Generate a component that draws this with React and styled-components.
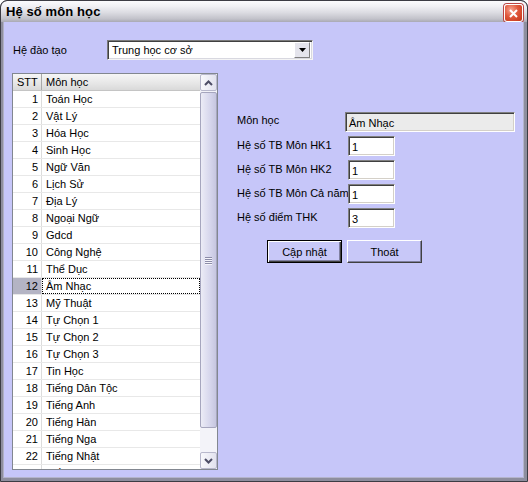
import React from 'react';
import styled, { createGlobalStyle } from 'styled-components';

const GlobalStyle = createGlobalStyle`
  html, body {
    margin: 0;
    padding: 0;
    background: #ffffff;
  }
  * {
    box-sizing: border-box;
  }
`;

const subjects = [
  'Toán Học', 'Vật Lý', 'Hóa Học', 'Sinh Học', 'Ngữ Văn', 'Lịch Sử', 'Địa Lý',
  'Ngoại Ngữ', 'Gdcd', 'Công Nghệ', 'Thể Dục', 'Âm Nhạc', 'Mỹ Thuật',
  'Tự Chọn 1', 'Tự Chọn 2', 'Tự Chọn 3', 'Tin Học', 'Tiếng Dân Tộc',
  'Tiếng Anh', 'Tiếng Hàn', 'Tiếng Nga', 'Tiếng Nhật', 'Tiếng Pháp',
];

const Window = styled.div`
  width: 528px;
  height: 482px;
  display: flex;
  flex-direction: column;
  background: #4a4a56;
  border: 1px solid #3c3c44;
  border-radius: 7px 7px 0 0;
  overflow: hidden;
  font-family: 'Liberation Sans', Arial, sans-serif;
  font-size: 11px;
  color: #000;
`;

const TitleBar = styled.div`
  height: 21px;
  flex: none;
  display: flex;
  align-items: center;
  justify-content: space-between;
  padding: 0 4px 0 5px;
  background: linear-gradient(#fbfbfd 0%, #f0f0f4 25%, #dcdce2 55%, #c2c2ca 85%, #a9a9b4 100%);
  border-radius: 6px 6px 0 0;
`;

const Title = styled.span`
  font-size: 13px;
  font-weight: bold;
  color: #000;
  letter-spacing: 0.1px;
`;

const CloseButton = styled.div`
  width: 19px;
  height: 18px;
  margin-top: 3px;
  border-radius: 3px;
  border: 1px solid #fff;
  background: radial-gradient(circle at 35% 30%, #f7a492 0%, #e0583c 45%, #c23417 100%);
  box-shadow: 0 0 0 1px #b44;
  display: flex;
  align-items: center;
  justify-content: center;
`;

const Body = styled.div`
  flex: 1;
  display: flex;
  flex-direction: column;
  background: #c6c6f9;
  border-style: solid;
  border-color: #8e8e9e;
  border-width: 0 3px 3px 2px;
  box-shadow: inset 1px 0 0 #b0b0c4, inset -1px -1px 0 #b4b4cc;
  padding: 18px 0 0 10px;
`;

const TopRow = styled.div`
  display: flex;
  align-items: center;
  height: 20px;
`;

const FieldLabel = styled.div`
  width: ${(p) => p.$width}px;
  flex: none;
  padding-left: ${(p) => p.$indent || 0}px;
  white-space: nowrap;
  overflow: hidden;
  line-height: 16px;
  align-self: flex-start;
  padding-top: ${(p) => p.$top || 0}px;
`;

const Combo = styled.div`
  width: 206px;
  height: 20px;
  display: flex;
  align-items: center;
  justify-content: space-between;
  background: #fff;
  border-style: solid;
  border-width: 1px;
  border-color: #7a7a7a #f4f4f4 #f4f4f4 #7a7a7a;
  box-shadow: inset 1px 1px 0 #404040, inset -1px -1px 0 #d8d8e0;
  padding: 0 2px 0 4px;
`;

const ComboArrow = styled.div`
  width: 16px;
  height: 16px;
  background: #e4e4ec;
  border: 1px solid;
  border-color: #fff #808080 #808080 #fff;
  display: flex;
  align-items: center;
  justify-content: center;
`;

const MainRow = styled.div`
  display: flex;
  margin-top: 13px;
`;

const List = styled.div`
  width: 206px;
  height: 397px;
  display: flex;
  border: 1px solid #828790;
  background: #fff;
  margin-left: -1px;
`;

const Grid = styled.div`
  flex: 1;
  overflow: hidden;
`;

const HeaderRow = styled.div`
  display: grid;
  grid-template-columns: 29px 1fr;
  height: 17px;
  background: linear-gradient(#f6f6f6, #e6e6e6 60%, #d9d9d9);
  border-bottom: 1px solid #c4c4c4;
`;

const HeaderCell = styled.div`
  line-height: 16px;
  padding-left: 4px;
  border-right: ${(p) => (p.$sep ? '1px solid #a8a8a8' : 'none')};
`;

const Row = styled.div`
  display: grid;
  grid-template-columns: 29px 1fr;
  height: 17px;
  border-bottom: 1px solid #e8e8e8;
`;

const NumCell = styled.div`
  text-align: right;
  padding-right: 3px;
  line-height: 16px;
  border-right: 1px solid #dcdcdc;
  background: ${(p) => (p.$selected ? '#b4b4c4' : 'transparent')};
`;

const NameCell = styled.div`
  line-height: 14px;
  padding-left: 3px;
  white-space: nowrap;
  border: 1px ${(p) => (p.$focus ? 'dotted #000' : 'solid transparent')};
`;

const ScrollBar = styled.div`
  width: 17px;
  flex: none;
  display: flex;
  flex-direction: column;
  background: #f3f3f9;
`;

const ScrollButton = styled.div`
  width: 17px;
  height: 17px;
  flex: none;
  border: 1px solid #b8b8cc;
  border-radius: 2px;
  background: linear-gradient(90deg, #f8f8fc, #e2e2ee);
  display: flex;
  align-items: center;
  justify-content: center;
`;

const Track = styled.div`
  flex: 1;
  padding: 1px 0;
`;

const Thumb = styled.div`
  height: 336px;
  border: 1px solid #a6a6be;
  border-radius: 2px;
  background: linear-gradient(90deg, #ececf6, #d6d6ec 60%, #c6c6e0);
  display: flex;
  flex-direction: column;
  align-items: center;
  justify-content: center;
  gap: 1px;
`;

const Grip = styled.div`
  width: 7px;
  height: 1px;
  background: #8c8ca8;
  box-shadow: 0 1px 0 #f4f4fa;
`;

const Form = styled.div`
  margin-left: 19px;
  padding-top: 39px;
  display: flex;
  flex-direction: column;
`;

const FormRow = styled.div`
  display: flex;
  height: 20px;
  margin-bottom: 4px;
`;

const TextBox = styled.div`
  width: ${(p) => p.$width}px;
  height: 20px;
  flex: none;
  background: ${(p) => (p.$disabled ? '#ebebeb' : '#fff')};
  border-style: solid;
  border-width: 1px;
  border-color: #808080 #fff #fff #808080;
  box-shadow: inset 1px 1px 0 #404040, inset -1px -1px 0 #d4d0c8;
  padding: 3px 3px 0 3px;
  line-height: 14px;
  white-space: nowrap;
`;

const ButtonRow = styled.div`
  display: flex;
  gap: 5px;
  margin-top: 8px;
  padding-left: 30px;
`;

const Button = styled.div`
  width: 75px;
  height: 23px;
  display: flex;
  align-items: center;
  justify-content: center;
  background: #c8c8f8;
  border: 1px solid;
  border-color: ${(p) => (p.$default ? '#000' : '#fff #404040 #404040 #fff')};
  box-shadow: ${(p) =>
    p.$default
      ? 'inset 1px 1px 0 #fff, inset -1px -1px 0 #404040, inset -2px -2px 0 #8080a0'
      : 'inset -1px -1px 0 #8080a0'};
`;

const Chevron = ({ up }) => (
  <svg width="9" height="6" viewBox="0 0 9 6">
    <path
      d={up ? 'M1 5 L4.5 1.5 L8 5' : 'M1 1 L4.5 4.5 L8 1'}
      fill="none"
      stroke="#4d4d66"
      strokeWidth="2"
    />
  </svg>
);

const App = () => {
  return (
    <>
      <GlobalStyle />
      <Window>
        <TitleBar>
          <Title>Hệ số môn học</Title>
          <CloseButton>
            <svg width="9" height="9" viewBox="0 0 9 9">
              <path d="M1 1 L8 8 M8 1 L1 8" stroke="#fff" strokeWidth="2" />
            </svg>
          </CloseButton>
        </TitleBar>
        <Body>
          <TopRow>
            <FieldLabel $width={94} $top={2}>Hệ đào tạo</FieldLabel>
            <Combo>
              <span>Trung học cơ sở</span>
              <ComboArrow>
                <svg width="7" height="4" viewBox="0 0 7 4">
                  <path d="M0 0 H7 L3.5 4 Z" fill="#000" />
                </svg>
              </ComboArrow>
            </Combo>
          </TopRow>
          <MainRow>
            <List>
              <Grid>
                <HeaderRow>
                  <HeaderCell $sep>STT</HeaderCell>
                  <HeaderCell>Môn học</HeaderCell>
                </HeaderRow>
                {subjects.map((name, i) => (
                  <Row key={name}>
                    <NumCell $selected={i === 11}>{i + 1}</NumCell>
                    <NameCell $focus={i === 11}>{name}</NameCell>
                  </Row>
                ))}
              </Grid>
              <ScrollBar>
                <ScrollButton>
                  <Chevron up />
                </ScrollButton>
                <Track>
                  <Thumb>
                    <Grip />
                    <Grip />
                    <Grip />
                    <Grip />
                  </Thumb>
                </Track>
                <ScrollButton>
                  <Chevron />
                </ScrollButton>
              </ScrollBar>
            </List>
            <Form>
              <FormRow>
                <FieldLabel $width={108} $top={0}>Môn học</FieldLabel>
                <TextBox $width={170} $disabled>Âm Nhạc</TextBox>
              </FormRow>
              <FormRow>
                <FieldLabel $width={111} $top={1}>Hệ số TB Môn HK1</FieldLabel>
                <TextBox $width={47}>1</TextBox>
              </FormRow>
              <FormRow>
                <FieldLabel $width={111} $top={1}>Hệ số TB Môn HK2</FieldLabel>
                <TextBox $width={47}>1</TextBox>
              </FormRow>
              <FormRow>
                <FieldLabel $width={111} $top={1}>Hệ số TB Môn Cả năm</FieldLabel>
                <TextBox $width={47}>1</TextBox>
              </FormRow>
              <FormRow>
                <FieldLabel $width={111} $top={1}>Hệ số điểm THK</FieldLabel>
                <TextBox $width={47}>3</TextBox>
              </FormRow>
              <ButtonRow>
                <Button $default>Cập nhật</Button>
                <Button>Thoát</Button>
              </ButtonRow>
            </Form>
          </MainRow>
        </Body>
      </Window>
    </>
  );
};

export default App;
